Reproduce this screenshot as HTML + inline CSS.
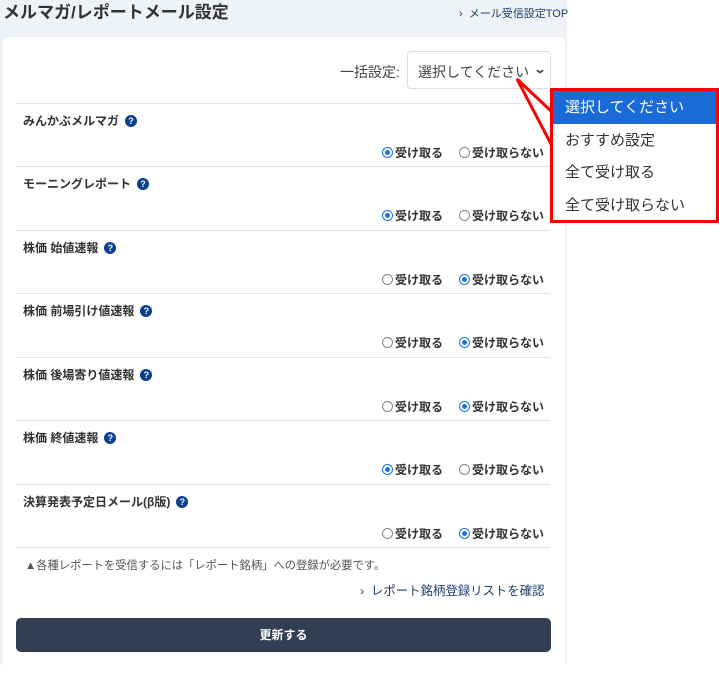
<!DOCTYPE html>
<html><head><meta charset="utf-8"><style>
*{margin:0;padding:0;box-sizing:border-box}
body{width:719px;height:665px;overflow:hidden;background:#fff;font-family:"Liberation Sans","Noto Sans CJK JP",sans-serif;position:relative;color:#333}
.bg{position:absolute;left:0;top:0;width:567px;height:665px;background:#eff3f8}
h1{position:absolute;left:3px;top:1px;font-size:17px;font-weight:bold;color:#333;line-height:24px}
.top{position:absolute;left:459px;top:5px;font-size:11px;color:#1f3f6f}
.card{position:absolute;left:3px;top:37px;width:562px;height:640px;background:#fff;border-radius:6px}
.lbl{position:absolute;left:340px;top:62px;font-size:14px;color:#444}
.sel{position:absolute;left:407px;top:51px;width:144px;height:38px;border:1px solid #ddd;border-radius:4px;font-size:14px;color:#444;padding:10px 0 0 10px}
.sel span{position:absolute;right:5px;top:10px;font-size:12px;font-weight:bold;transform:scaleX(1.3)}
.row{position:absolute;left:16px;width:534px;border-top:1px solid #e3e3e3;height:64px}
.row .t{position:absolute;left:7px;top:8px;font-size:12px;font-weight:bold;color:#333}
.q{display:inline-block;width:12px;height:12px;border-radius:50%;background:#0b3f8f;color:#fff;font-size:9px;text-align:center;line-height:12px;margin-left:6px;vertical-align:1px}
.r{position:absolute;top:40px;font-size:12px;font-weight:bold;color:#333}
.c{display:inline-block;width:11px;height:11px;border:1px solid #888;border-radius:50%;vertical-align:-1px;margin-right:2px;position:relative}
.c.on{border-color:#1a73e8}
.c.on::after{content:"";position:absolute;left:2px;top:2px;width:5px;height:5px;border-radius:50%;background:#1a73e8}
.note{position:absolute;left:25px;top:557px;font-size:11.3px;color:#555}
.link2{position:absolute;left:360px;top:581px;font-size:12.4px;color:#1f3f6f}
.btn{position:absolute;left:16px;top:618px;width:535px;height:34px;background:#323f52;border-radius:5px;color:#fff;font-weight:bold;font-size:12px;text-align:center;line-height:34px}
.dd{position:absolute;left:550px;top:88px;width:169px;height:135px;border:3px solid #f00;background:#fff}
.dd div{height:32.5px;font-size:15px;color:#333;padding:5px 0 0 12px}
.dd .a{background:#1a6ad8;color:#fff}
</style></head><body>
<div class="bg"></div>
<h1>メルマガ/レポートメール設定</h1>
<div class="top">›&nbsp; メール受信設定TOP</div>
<div class="card"></div>
<div class="lbl">一括設定:</div>
<div class="sel">選択してください<span>⌄</span></div>

<div class="row" style="top:103px"><div class="t">みんかぶメルマガ<span class="q">?</span></div><div class="r" style="left:366px"><span class="c on"></span>受け取る</div><div class="r" style="left:443px"><span class="c"></span>受け取らない</div></div>
<div class="row" style="top:166px"><div class="t">モーニングレポート<span class="q">?</span></div><div class="r" style="left:366px"><span class="c on"></span>受け取る</div><div class="r" style="left:443px"><span class="c"></span>受け取らない</div></div>
<div class="row" style="top:230px"><div class="t">株価 始値速報<span class="q">?</span></div><div class="r" style="left:366px"><span class="c"></span>受け取る</div><div class="r" style="left:443px"><span class="c on"></span>受け取らない</div></div>
<div class="row" style="top:293px"><div class="t">株価 前場引け値速報<span class="q">?</span></div><div class="r" style="left:366px"><span class="c"></span>受け取る</div><div class="r" style="left:443px"><span class="c on"></span>受け取らない</div></div>
<div class="row" style="top:357px"><div class="t">株価 後場寄り値速報<span class="q">?</span></div><div class="r" style="left:366px"><span class="c"></span>受け取る</div><div class="r" style="left:443px"><span class="c on"></span>受け取らない</div></div>
<div class="row" style="top:420px"><div class="t">株価 終値速報<span class="q">?</span></div><div class="r" style="left:366px"><span class="c on"></span>受け取る</div><div class="r" style="left:443px"><span class="c"></span>受け取らない</div></div>
<div class="row" style="top:484px"><div class="t">決算発表予定日メール(β版)<span class="q">?</span></div><div class="r" style="left:366px"><span class="c"></span>受け取る</div><div class="r" style="left:443px"><span class="c on"></span>受け取らない</div></div>
<div class="row" style="top:547px;height:1px"></div>

<div class="note">▲各種レポートを受信するには「レポート銘柄」への登録が必要です。</div>
<div class="link2">›&nbsp; レポート銘柄登録リストを確認</div>
<div class="btn">更新する</div>

<svg style="position:absolute;left:0;top:0" width="719" height="665"><polyline points="552,112 517,79 552,146" fill="none" stroke="#f00" stroke-width="3"/></svg>
<div class="dd"><div class="a">選択してください</div><div>おすすめ設定</div><div>全て受け取る</div><div>全て受け取らない</div></div>
</body></html>
